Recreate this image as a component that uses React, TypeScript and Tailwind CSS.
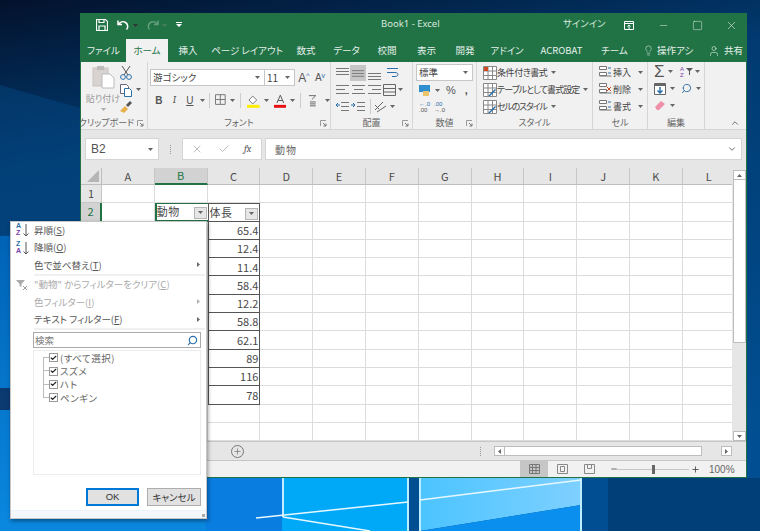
import React from 'react';
import { ChevronDown, ChevronUp, Lightbulb, Minus, Plus, Search, Square, User, X, Check } from 'lucide-react';

const jp = "font-['Noto_Sans_CJK_JP','Noto_Sans',sans-serif] [font-feature-settings:'palt']";

const tabs = [
  { name: 'ファイル', w: 'w-[45px]' },
  { name: 'ホーム', w: 'w-[42px]', active: true },
  { name: '挿入', w: 'w-[40px]' },
  { name: 'ページ レイアウト', w: 'w-[78px]' },
  { name: '数式', w: 'w-[40px]' },
  { name: 'データ', w: 'w-[41px]' },
  { name: '校閲', w: 'w-[40px]' },
  { name: '表示', w: 'w-[39px]' },
  { name: '開発', w: 'w-[38px]' },
  { name: 'アドイン', w: 'w-[46px]' },
  { name: 'ACROBAT', w: 'w-[63px]' },
  { name: 'チーム', w: 'w-[43px]' },
];

const columns = ['A', 'B', 'C', 'D', 'E', 'F', 'G', 'H', 'I', 'J', 'K', 'L'];
const lengths = ['65.4', '12.4', '11.4', '58.4', '12.2', '58.8', '62.1', '89', '116', '78'];

const Caret = ({ className = '' }: { className?: string }) => (
  <svg width="5" height="3" viewBox="0 0 5 3" className={`shrink-0 ${className}`}>
    <path d="M0 0h5L2.5 3z" fill="#666" />
  </svg>
);

const Launcher = () => (
  <svg width="7" height="7" viewBox="0 0 7 7" className="shrink-0">
    <path d="M.5 6V.5H6" fill="none" stroke="#999" />
    <path d="M3 3l3 3M6 3.5V6H3.5" fill="none" stroke="#777" />
  </svg>
);

const Lines = ({ kind }: { kind: 'top' | 'mid' | 'bot' | 'l' | 'c' | 'r' }) => {
  const y = kind === 'top' ? [2, 5, 8] : kind === 'mid' ? [4, 7, 10] : kind === 'bot' ? [7, 10, 13] : [2, 6, 10];
  const x = (i: number) => {
    const short = i === 1;
    if (kind === 'l') return short ? [2, 11] : [2, 15];
    if (kind === 'r') return short ? [6, 15] : [2, 15];
    if (kind === 'c') return short ? [4, 13] : [2, 15];
    return [2, 15];
  };
  return (
    <svg width="17" height="14" viewBox="0 0 17 14">
      {y.map((v, i) => (
        <path key={i} d={`M${x(i)[0]} ${v}.5H${x(i)[1]}`} stroke="#777" />
      ))}
    </svg>
  );
};

const Group = ({ label, w, launcher, children }: { label: string; w: string; launcher?: boolean; children: React.ReactNode }) => (
  <div className={`${w} h-full shrink-0 flex flex-col border-r border-[#d6d6d6]`}>
    <div className="flex-1 min-h-0">{children}</div>
    <div className="h-[13px] flex items-center relative justify-center text-[9px] leading-none text-[#666] whitespace-nowrap">
      <span className={launcher && label === 'クリップボード' ? 'mr-[15px]' : ''}>{label}</span>
      {launcher && (
        <span className="absolute right-[3px] top-[4px]">
          <Launcher />
        </span>
      )}
    </div>
  </div>
);

const Clipboard = () => (
  <Group label="クリップボード" w="w-[67px]" launcher>
    <div className="flex pl-[5px] pt-[3px]">
      <div className="w-[34px] flex flex-col items-center text-[9px] leading-none text-[#999]">
        <svg width="23" height="24" viewBox="0 0 23 24">
          <rect x="1" y="3" width="15" height="18" fill="#d8d2d0" stroke="#c8c2c0" />
          <rect x="5" y="1" width="7" height="4" fill="#bbb" />
          <path d="M10 9h8l4 4v10H10z" fill="#fff" stroke="#bbb" />
        </svg>
        <span className="mt-[5px] whitespace-nowrap">貼り付け</span>
        <Caret className="mt-[5px] opacity-50" />
      </div>
      <div className="-ml-px -mt-px flex flex-col">
        <div className="h-[17px] flex items-center">
          <svg width="14" height="16" viewBox="0 0 14 16">
            <path d="M3 1l6 9M11 1L5 10" stroke="#555" fill="none" />
            <circle cx="4" cy="12" r="2.4" fill="none" stroke="#2d6fa8" />
            <circle cx="10" cy="12" r="2.4" fill="none" stroke="#2d6fa8" />
          </svg>
        </div>
        <div className="h-[17px] flex items-center gap-[3px]">
          <svg width="14" height="16" viewBox="0 0 14 16">
            <path d="M1.500 2.500h6l2 2v7h-8z" fill="#fff" stroke="#667" />
            <path d="M5.500 6.500h5l2 2v6h-7z" fill="#fff" stroke="#2d6fa8" />
          </svg>
          <Caret />
        </div>
        <div className="h-[17px] flex items-center">
          <svg width="14" height="14" viewBox="0 0 14 14">
            <path d="M1 11l5-5 3 3-4 4z" fill="#e8b04a" />
            <path d="M7 5l4-4 2 2-4 4z" fill="#555" />
          </svg>
        </div>
      </div>
    </div>
  </Group>
);

const Font = () => (
  <Group label="フォント" w="w-[183px]" launcher>
    <div className="pl-[2px] pt-[7px] flex flex-col gap-[6px]">
      <div className="flex items-center h-[17px]">
        <div className="w-[115px] h-full bg-white border border-[#c6c6c6] flex items-center justify-between px-[2px] text-[9.5px] text-[#444]">
          <span>游ゴシック</span>
          <Caret className="mr-[2px]" />
        </div>
        <div className="w-[30px] h-full bg-white border border-l-0 border-[#c6c6c6] flex items-center justify-between px-[2px] text-[10px] text-[#444]">
          <span>11</span>
          <Caret className="mr-[2px]" />
        </div>
        <div className="w-[16px] ml-[1px] text-[12px] text-[#555] text-center font-['Liberation_Sans',sans-serif]">
          A<sup className="text-[#2d6fa8] text-[7px]">^</sup>
        </div>
        <div className="w-[16px] text-[10px] text-[#555] text-center font-['Liberation_Sans',sans-serif]">
          A<sup className="text-[#2d6fa8] text-[7px]">v</sup>
        </div>
      </div>
      <div className="flex items-center h-[16px] text-[#555] font-['Liberation_Sans',sans-serif] text-[10px]">
        <span className="w-[16px] ml-[1px] text-center font-bold">B</span>
        <span className="w-[16px] text-center italic font-serif">I</span>
        <span className="w-[16px] text-center underline">U</span>
        <Caret className="ml-[2px]" />
        <span className="w-px h-[15px] bg-[#ccc] ml-[4px] mr-[4px]" />
        <svg width="13" height="13" viewBox="0 0 13 13" className="ml-[1px]">
          <path d="M.5.500h10v10H.5zM5.500.5v10M.5 5.500h10" fill="none" stroke="#777" />
        </svg>
        <Caret className="ml-[3px]" />
        <span className="w-px h-[15px] bg-[#ccc] ml-[5px] mr-[5px]" />
        <svg width="15" height="15" viewBox="0 0 15 15">
          <path d="M3 7l4-4 4 4-4 4z" fill="#fff" stroke="#777" />
          <rect x="1" y="12" width="13" height="3" fill="#ffee00" />
        </svg>
        <Caret className="ml-[3px]" />
        <svg width="13" height="15" viewBox="0 0 13 15" className="ml-[5px]">
          <path d="M3 10l3.500-8L10 10M4.500 7.500h4" fill="none" stroke="#555" />
          <rect x="0" y="12" width="13" height="3" fill="#e81010" />
        </svg>
        <Caret className="ml-[4px]" />
        <span className="w-px h-[15px] bg-[#ccc] ml-[5px] mr-[5px]" />
        <svg width="12" height="15" viewBox="0 0 12 15" className="ml-[1px]">
          <path d="M2 2.500h7L5 6.500M3 9h6M3 11h6M3 13h6" fill="none" stroke="#666" />
        </svg>
        <Caret className="ml-[6px]" />
      </div>
    </div>
  </Group>
);

const Align = () => (
  <Group label="配置" w="w-[82px]" launcher>
    <div className="pl-[3px] grid grid-cols-[16px_16px_16px_22px] auto-rows-[17px] pt-[2px] items-center justify-items-center">
      <Lines kind="top" />
      <div className="bg-[#c6c6c6] w-[16px] h-[16px] flex items-center justify-center"><Lines kind="mid" /></div>
      <Lines kind="bot" />
      <svg width="15" height="12" viewBox="0 0 15 12"><path d="M1 1.500h11M1 5.500h8c4 0 4 4 0 4H6" fill="none" stroke="#2d6fa8" /></svg>
      <Lines kind="l" />
      <Lines kind="c" />
      <Lines kind="r" />
      <div className="flex items-center gap-[2px]">
        <svg width="13" height="12" viewBox="0 0 13 12"><path d="M.5.500h12v11H.5zM.5 4.500h12M.5 8h12" fill="none" stroke="#666" /></svg>
        <Caret />
      </div>
      <svg width="14" height="12" viewBox="0 0 14 12"><path d="M6 1.500h8M6 5.500h8M6 9.500h8" stroke="#777" /><path d="M5 4H1m2-2L1 4l2 2" fill="none" stroke="#2d6fa8" /></svg>
      <svg width="14" height="12" viewBox="0 0 14 12"><path d="M6 1.500h8M6 5.500h8M6 9.500h8" stroke="#777" /><path d="M0 4h4M2 2l2 2-2 2" fill="none" stroke="#2d6fa8" /></svg>
      <div className="col-span-2 justify-self-start flex items-center ml-[4px]">
        <span className="w-px h-[15px] bg-[#ccc] mr-[3px]" />
        <svg width="13" height="13" viewBox="0 0 13 13"><path d="M1 10l8-8M3 12l9-6M1 5l4 4" fill="none" stroke="#666" /></svg>
        <Caret className="ml-[3px]" />
      </div>
    </div>
  </Group>
);

const NumberGroup = () => (
  <Group label="数値" w="w-[64px]" launcher>
    <div className="pl-[3px] pt-[2px]">
      <div className="w-[57px] h-[17px] bg-white border border-[#c6c6c6] flex items-center justify-between px-[2px] text-[9.5px] text-[#444]">
        <span>標準</span>
        <Caret className="mr-[2px]" />
      </div>
      <div className="h-[17px] mt-[1px] flex items-center text-[#555] font-['Liberation_Sans',sans-serif]">
        <svg width="13" height="13" viewBox="0 0 13 13" className="ml-[2px]">
          <rect x="1" y="1" width="11" height="7" fill="#2d8fcf" />
          <rect x="5" y="7" width="6" height="5" fill="#e8c46a" />
        </svg>
        <Caret className="ml-[4px]" />
        <span className="ml-[6px] text-[11px]">%</span>
        <span className="ml-[9px] text-[11px] font-bold leading-none">,</span>
      </div>
      <div className="h-[16px] flex items-center gap-[4px] pl-[3px] text-[6px] leading-[6px] text-[#555] font-['Liberation_Sans',sans-serif]">
        <span className="text-[#2d6fa8]">←.0<br /><span className="text-[#555]">.00</span></span>
        <span className="text-[#2d6fa8]">.00<br /><span className="text-[#555]">→.0</span></span>
      </div>
    </div>
  </Group>
);

const StyleIcon = ({ red }: { red?: boolean }) => (
  <svg width="14" height="14" viewBox="0 0 14 14" className="shrink-0">
    <path d="M.5.500h13v13H.5zM.5 5h13M.5 9.500h13M5 .5v13M9.500.5v13" fill="#fff" stroke="#888" />
    {red ? <rect x="1" y="1" width="4" height="4" fill="#d04a20" /> : <path d="M5 13l7-7 1 1-6 6z" fill="#2d6fa8" />}
  </svg>
);

const styleRows = [
  { name: '条件付き書式', track: 'tracking-[-0.4px]' },
  { name: 'テーブルとして書式設定', track: 'tracking-[-0.9px]' },
  { name: 'セルのスタイル', track: 'tracking-[-1.2px]' },
];

const Styles = () => (
  <Group label="スタイル" w="w-[116px]">
    <div className="pl-[6px] pt-[2px] flex flex-col text-[9px] leading-[17px] text-[#444]">
      {styleRows.map((s, i) => (
        <div key={s.name} className="h-[17px] flex items-center whitespace-nowrap">
          <StyleIcon red={i === 0} />
          <span className={s.track}>{s.name}</span>
          <Caret className="ml-[4px]" />
        </div>
      ))}
    </div>
  </Group>
);

const Cells = () => (
  <Group label="セル" w="w-[55px]">
    <div className="pl-[6px] pt-[2px] flex flex-col text-[9px] text-[#444]">
      {['挿入', '削除', '書式'].map((s, i) => (
        <div key={s} className="h-[17px] flex items-center">
          <svg width="13" height="13" viewBox="0 0 13 13" className="shrink-0">
            <path d="M.5.500h7v3h-7zM.5 6.500h7v3h-7zM.5 10h12" fill="#fff" stroke="#777" />
            {i === 1 ? <path d="M8 4l4 4M12 4l-4 4" stroke="#d04a20" /> : <path d="M9 2h3M9 7h3" stroke="#2d6fa8" />}
          </svg>
          <span className="ml-[1px] w-[25px]">{s}</span>
          <Caret />
        </div>
      ))}
    </div>
  </Group>
);

const Editing = () => (
  <Group label="編集" w="w-[57px]">
    <div className="pl-[6px] pt-[1px] grid grid-cols-[26px_24px] auto-rows-[17px] items-center">
      <div className="flex items-center">
        <span className="text-[17px] leading-none text-[#555] font-['Liberation_Sans',sans-serif]">Σ</span>
        <Caret className="ml-[3px]" />
      </div>
      <div className="flex items-center gap-[2px]">
        <span className="text-[6px] leading-[6px] text-[#7a3fa8] font-['Liberation_Sans',sans-serif]">A<br />Z</span>
        <svg width="7" height="7" viewBox="0 0 7 7"><path d="M0 0h7L4 3v4H3V3z" fill="#555" /></svg>
        <Caret />
      </div>
      <div className="flex items-center gap-[3px]">
        <svg width="12" height="12" viewBox="0 0 12 12"><path d="M.5.500h11v11H.5z" fill="#fff" stroke="#666" /><path d="M1 1h10v2H1z" fill="#666" /><path d="M6 4v6M3.500 7.500L6 10l2.500-2.500" fill="none" stroke="#2d6fa8" strokeWidth="1.500" /></svg>
        <Caret className="ml-[1px]" />
      </div>
      <div className="flex items-center gap-[3px] pl-[1px]">
        <Search size={11} strokeWidth={2} className="text-[#2d6fa8] -scale-x-100" />
        <Caret className="ml-[1px]" />
      </div>
      <div className="flex items-center gap-[3px]">
        <svg width="12" height="11" viewBox="0 0 12 11"><path d="M1 7l6-6 4 3-6 6H3z" fill="#ef8fa8" /></svg>
        <Caret className="ml-[1px]" />
      </div>
    </div>
  </Group>
);

const Ribbon = () => (
  <div className={`h-[67px] shrink-0 bg-[#f1f1f1] flex relative ${jp}`}>
    <Clipboard />
    <Font />
    <Align />
    <NumberGroup />
    <Styles />
    <Cells />
    <Editing />
    <ChevronUp size={10} strokeWidth={2} className="absolute right-[6px] bottom-[1px] text-[#555]" />
  </div>
);

const FormulaBar = () => (
  <div className={`h-[39px] shrink-0 bg-[#e6e6e6] border-t border-[#d4d4d4] flex items-start pl-[4px] pr-[4px] pt-[8px] ${jp}`}>
    <div className="w-[74px] h-[22px] bg-white border border-[#d4d4d4] flex items-center justify-between pl-[5px] pr-[5px] text-[12px] text-[#555]">
      <span className="font-['Liberation_Sans',sans-serif]">B2</span>
      <Caret />
    </div>
    <div className="w-[23px] h-[22px] flex items-center justify-center text-[#aaa]">
      <span className="w-[3px] h-[9px] border-l border-dotted border-[#999] ml-[2px]" />
    </div>
    <div className="w-[80px] h-[22px] bg-white border border-[#d4d4d4] flex items-center pl-[8px] text-[#aaa]">
      <X size={12} strokeWidth={1.5} />
      <Check size={12} strokeWidth={1.5} className="ml-[15px]" />
      <span className="ml-[14px] text-[10px] italic text-[#555] font-serif">fx</span>
    </div>
    <div className="ml-[3px] flex-1 h-[22px] bg-white border border-[#d4d4d4] flex items-center justify-between pl-[9px] pr-[4px] text-[10px] text-[#666]">
      <span className="tracking-[1px]">動物</span>
      <ChevronDown size={10} strokeWidth={2} className="text-[#555]" />
    </div>
  </div>
);

const FilterButton = () => (
  <span className="absolute right-[1px] bottom-[1px] w-[13px] h-[12px] bg-[#e6e6e6] border border-[#b5b5b5] flex items-center justify-center">
    <Caret />
  </span>
);

const Sheet = () => {
  const rows = Array.from({ length: 14 }, (_, i) => i + 1);
  return (
    <div className={`flex-1 min-h-0 flex bg-[#e6e6e6] ${jp}`}>
      <div className="w-[652px] overflow-hidden bg-white">
        <div className="grid grid-cols-[21px_repeat(12,52.8px)] grid-rows-[17px_repeat(14,18.3px)] text-[11px] text-[#4a4a4a]">
          <div className="bg-[#e6e6e6] border-r border-b border-[#bdbdbd] relative overflow-hidden">
            <span className="absolute right-[2px] bottom-[2px] w-0 h-0 border-l-[12px] border-l-transparent border-b-[12px] border-b-[#b5b5b5]" />
          </div>
          {columns.map((c) => (
            <div
              key={c}
              className={`flex items-center justify-center border-r leading-none border-[#c6c6c6] ${c === 'B' ? 'bg-[#d2d2d2] border-b-2 border-b-[#217346] text-[#217346]' : 'bg-[#e6e6e6] border-b border-b-[#bdbdbd]'}`}
            >
              {c}
            </div>
          ))}
          {rows.map((r) => (
            <React.Fragment key={r}>
              {/* row numbers from 3 down sit under the open filter menu */}
              <div className={`flex items-center justify-center border-r border-b border-[#c6c6c6] leading-none ${r === 2 ? 'bg-[#d2d2d2] text-[#217346] border-r-2 border-r-[#217346]' : 'bg-[#e6e6e6]'}`}>
                {r <= 2 ? r : null}
              </div>
              {columns.map((c) => {
                const inTable = r >= 2 && r <= 12;
                if (c === 'B' && r === 2)
                  return (
                    <div key={c} className="relative border-2 border-r-0 border-t border-[#217346] flex items-center leading-none whitespace-nowrap tracking-[0.5px]">
                      動物
                      <FilterButton />
                    </div>
                  );
                if (c === 'C' && inTable)
                  return (
                    <div
                      key={c}
                      className={`relative border-x border-b border-[#555] flex items-center ${r === 2 ? 'border-t pl-[1px] tracking-[0.5px]' : 'justify-end pr-[1px]'}`}
                    >
                      {r === 2 ? '体長' : lengths[r - 3]}
                      {r === 2 && <FilterButton />}
                    </div>
                  );
                return <div key={c} className="border-r border-b border-[#dcdcdc]" />;
              })}
            </React.Fragment>
          ))}
        </div>
      </div>
      <div className="w-[13px] ml-px flex flex-col pt-[2px]">
        <div className="h-[10px] bg-white border border-[#bdbdbd] flex items-center justify-center">
          <Caret className="rotate-180" />
        </div>
        <div className="h-[163px] bg-white border border-[#bdbdbd] border-t-0" />
        <div className="flex-1" />
        <div className="h-[10px] bg-white border border-[#bdbdbd] flex items-center justify-center">
          <Caret />
        </div>
      </div>
    </div>
  );
};

const SheetBar = () => (
  <div className="h-[20px] shrink-0 bg-[#e6e6e6] border-y border-[#c6c6c6] flex items-center">
    <div className="ml-[150px] w-[13px] h-[13px] rounded-full border border-[#777] flex items-center justify-center text-[#777]">
      <Plus size={9} strokeWidth={2} />
    </div>
    <span className="ml-[236px] w-[3px] h-[9px] border-l border-dotted border-[#999]" />
    <div className="ml-[11px] w-[238px] h-[10px] flex">
      <div className="w-[11px] h-[10px] bg-white border border-[#bdbdbd] flex items-center justify-center">
        <Caret className="rotate-90" />
      </div>
      <div className="w-[197px] h-[10px] bg-white border border-[#bdbdbd] border-l-0" />
      <div className="flex-1" />
      <div className="w-[11px] h-[10px] bg-white border border-[#bdbdbd] flex items-center justify-center">
        <Caret className="-rotate-90" />
      </div>
    </div>
  </div>
);

const StatusBar = () => (
  <div className="h-[16px] shrink-0 bg-[#f1f1f1] flex items-center text-[10px] text-[#666] font-['Liberation_Sans',sans-serif]">
    <div className="ml-[439px] w-[28px] h-full bg-[#c6c6c6] flex items-center justify-center">
      <svg width="11" height="10" viewBox="0 0 11 10"><path d="M.5.500h10v9H.5zM.5 3.500h10M.5 6.500h10M3.500.5v9M7 .5v9" fill="none" stroke="#777" /></svg>
    </div>
    <svg width="11" height="10" viewBox="0 0 11 10" className="ml-[9px]"><path d="M.5.500h10v9H.5zM3.500 2.500h4v5h-4z" fill="none" stroke="#888" /></svg>
    <svg width="11" height="10" viewBox="0 0 11 10" className="ml-[16px]"><path d="M.5.500h10v9H.5zM3.500.5v4h4v-4" fill="none" stroke="#888" /></svg>
    <Minus size={8} strokeWidth={2.5} className="ml-[15px] text-[#555]" />
    <div className="-ml-[1px] w-[72px] h-px bg-[#c6c6c6] relative">
      <span className="absolute left-[35px] -top-[4px] w-[3px] h-[9px] bg-[#666]" />
    </div>
    <Plus size={9} strokeWidth={2.5} className="ml-[2px] text-[#555]" />
    <span className="ml-[9px] text-[10px]">100%</span>
  </div>
);

const SortIcon = ({ top, bottom }: { top: string; bottom: string }) => (
  <>
    <span className="absolute left-[5px] top-[1px] text-[7px] leading-[7px] text-[#7a3fa8] font-['Liberation_Sans',sans-serif] font-bold">
      <span className="text-[#2d6fa8]">{top}</span>
      <br />
      {bottom}
    </span>
    <svg width="6" height="13" viewBox="0 0 6 13" className="absolute left-[12px] top-[3px]">
      <path d="M3 0v12M.5 9.500L3 12l2.500-2.500" fill="none" stroke="#555" />
    </svg>
  </>
);

const FilterMenu = () => {
  const rowCls = 'h-[17.5px] shrink-0 flex items-center justify-between pl-[23px] pr-[5px] whitespace-nowrap';
  return (
    <div className={`absolute left-[10px] top-[221px] w-[197px] h-[298px] bg-white border border-[#c6c6c6] shadow-[1px_2px_4px_rgba(0,0,0,0.4)] flex flex-col text-[9.5px] text-[#555] ${jp}`}>
      <div className={`${rowCls} relative -mt-px`}>
        <span>昇順(<u>S</u>)</span>
        <SortIcon top="A" bottom="Z" />
      </div>
      <div className={`${rowCls} relative`}>
        <span>降順(<u>O</u>)</span>
        <SortIcon top="Z" bottom="A" />
      </div>
      <div className={rowCls}>
        <span>色で並べ替え(<u>T</u>)</span>
        <Caret className="-rotate-90" />
      </div>
      <div className="ml-[23px] mr-[1px] h-[2px] shrink-0 bg-[#f0f0f0]" />
      <div className={`${rowCls} relative text-[#aaa]`}>
        <span>"動物" からフィルターをクリア(<u>C</u>)</span>
        <svg width="12" height="12" viewBox="0 0 12 12" className="absolute left-[5px] top-[3px]">
          <path d="M0 1h9L5.500 5v3L3.500 7V5z" fill="#aaa" />
          <path d="M7 7l4 4M11 7l-4 4" stroke="#999" />
        </svg>
      </div>
      <div className={`${rowCls} text-[#aaa]`}>
        <span>色フィルター(<u>I</u>)</span>
        <Caret className="-rotate-90 opacity-50" />
      </div>
      <div className={rowCls}>
        <span>テキスト フィルター(<u>F</u>)</span>
        <Caret className="-rotate-90" />
      </div>
      <div className="ml-[23px] mr-[1px] h-[2px] shrink-0 bg-[#f0f0f0]" />
      <div className="mt-[2px] ml-[22px] mr-[5px] h-[16px] shrink-0 border border-[#aaa] flex items-center justify-between pl-[1px] pr-[2px] text-[#777]">
        <span>検索</span>
        <Search size={11} strokeWidth={2.5} className="text-[#2d6fa8] -scale-x-100" />
      </div>
      <div className="mt-[2px] ml-[22px] mr-[5px] h-[125px] shrink-0 border border-[#ececec]">
        {['(すべて選択)', 'スズメ', 'ハト', 'ペンギン'].map((t, i) => (
          <div key={t} className="h-[13.4px] flex items-center relative pl-[15px] tracking-[0.5px] text-[#666]">
            <span className="absolute left-[9px] top-[6px] w-[6px] h-px bg-[#bbb]" />
            <span className={`absolute left-[9px] w-px bg-[#bbb] ${i === 0 ? 'top-[6px] h-[8px]' : i === 3 ? 'top-0 h-[7px]' : 'top-0 h-full'}`} />
            <span className="w-[9px] h-[9px] border border-[#999] bg-white flex items-center justify-center mr-[2px]">
              <Check size={8} strokeWidth={4} className="text-[#222]" />
            </span>
            {t}
          </div>
        ))}
      </div>
      <div className="mt-[13px] mr-[5px] flex justify-end gap-[8px]">
        <div className="w-[53px] h-[18px] bg-[#e1e1e1] border-2 border-[#0078d7] flex items-center justify-center text-[#333] font-['Liberation_Sans',sans-serif]">OK</div>
        <div className="w-[54px] h-[18px] bg-[#e1e1e1] border border-[#adadad] flex items-center justify-center text-[#333]">キャンセル</div>
      </div>
      <div className="mt-auto h-[8px] bg-[#f4f8fc] border-t border-[#eef3f8] relative">
        <span className="absolute right-[1px] bottom-[1px] w-[3px] h-[3px] bg-[#aaa]" />
      </div>
    </div>
  );
};

const Wallpaper = () => (
  <svg className="absolute inset-0" width="760" height="531" viewBox="0 0 760 531">
    <defs>
      <linearGradient id="bg" x1="0" y1="0" x2="0.25" y2="1">
        <stop offset="0" stopColor="#03122c" />
        <stop offset="0.3" stopColor="#013a70" />
        <stop offset="1" stopColor="#014f92" />
      </linearGradient>
      <linearGradient id="left" x1="0" y1="0" x2="0" y2="1">
        <stop offset="0" stopColor="#0062b4" />
        <stop offset="1" stopColor="#0a88e0" />
      </linearGradient>
      <linearGradient id="pane" x1="0" y1="0" x2="1" y2="0">
        <stop offset="0" stopColor="#4cc4ff" />
        <stop offset="1" stopColor="#7ed0ff" />
      </linearGradient>
    </defs>
    <rect width="760" height="531" fill="url(#bg)" />
    <path d="M0 85L80 108V236H0z" fill="#03467f" opacity="0.5" />
    <path d="M760 478V531H608V478z" fill="#013f78" />
    <path d="M0 236L206 230V531H0z" fill="url(#left)" />
    <path d="M0 388H10V410H0z" fill="#0a3a70" />
    <path d="M206 478H408V531H206z" fill="#0a7de0" />
    <path d="M282 478H408V531H282z" fill="#00a8f8" />
    <path d="M420 478H581V505L420 531z" fill="url(#pane)" />
    <path d="M420 531L581 505V531z" fill="#0a8fee" />
    <path d="M408 478V531M420 478V531M283 478V517M581 478V531" stroke="#bdeeff" strokeWidth="2" />
    <path d="M256 518L408 502M420 500L581 480M283 517L370 531" stroke="#e6f8ff" strokeWidth="1.500" />
  </svg>
);

export default function App() {
  return (
    <div className="relative w-[760px] h-[531px] overflow-hidden bg-[#013a70]">
      <Wallpaper />
      <div className="absolute left-[80px] top-[13px] w-[667px] h-[465px] bg-[#e6e6e6] border border-[#217346] flex flex-col">
        <div className={`h-[25px] shrink-0 bg-[#217346] flex items-center pb-[3px] text-[9.5px] text-[#d8e8de] relative ${jp}`}>
          <div className="flex items-center pl-[15px] text-white">
            <svg width="12" height="12" viewBox="0 0 12 12"><path d="M.5.500h9l2 2v9H.5zM3 .5v3h5v-3M3 11.500V7h6v4.500" fill="none" stroke="#fff" strokeWidth="1.200" /></svg>
            <svg width="13" height="12" viewBox="0 0 13 12" className="ml-[9px]"><path d="M1 1.500v4h4M1.500 5.500C3 3 6 2 8.500 3.500s3 5 1 7" fill="none" stroke="#fff" strokeWidth="1.500" /></svg>
            <Caret className="ml-[3px] invert brightness-200" />
            <svg width="13" height="12" viewBox="0 0 13 12" className="ml-[8px] opacity-30"><path d="M12 1.500v4H8M11.500 5.500C10 3 7 2 4.500 3.500s-3 5-1 7" fill="none" stroke="#fff" strokeWidth="1.500" /></svg>
            <Caret className="ml-[3px] invert opacity-30" />
            <svg width="6" height="6" viewBox="0 0 6 6" className="ml-[9px]"><path d="M0 .5h6M0 2h6l-3 3z" fill="#fff" stroke="none" /><path d="M0 .5h6" stroke="#fff" /></svg>
          </div>
          <span className="absolute left-[300px] top-[5px] leading-none whitespace-nowrap font-['Noto_Sans',sans-serif]">Book1 - Excel</span>
          <span className="absolute left-[482px] top-[5px] leading-none">サインイン</span>
          <svg width="10" height="9" viewBox="0 0 10 9" className="absolute left-[543px] top-[7px]"><path d="M.5.500h9v8h-9zM.5 2.500h9M5 8V4M3.500 5.500L5 4l1.500 1.500" fill="none" stroke="#fff" /></svg>
          <Minus size={11} className="absolute left-[577px] top-[6px] text-white" strokeWidth={1} />
          <Square size={11} className="absolute left-[611px] top-[6px] text-white" strokeWidth={1} />
          <X size={13} className="absolute left-[644px] top-[5px] text-white" strokeWidth={1} />
        </div>
        <div className={`h-[23px] shrink-0 bg-[#217346] flex items-stretch text-[9.5px] text-[#e6f0ea] whitespace-nowrap relative ${jp}`}>
          {tabs.map((t) => (
            <div key={t.name} className={`${t.w} flex items-center justify-center ${t.active ? 'bg-[#f1f1f1] text-[#217346]' : ''}`}>
              {t.name}
            </div>
          ))}
          <div className="flex items-center">
            <Lightbulb size={11} strokeWidth={1.2} className="ml-[7px]" />
            <span className="ml-[3px] w-[39px] overflow-hidden">操作アシ</span>
            <User size={12} strokeWidth={1.2} className="ml-[12px]" />
            <span className="ml-[4px]">共有</span>
          </div>
        </div>
        <Ribbon />
        <FormulaBar />
        <Sheet />
        <SheetBar />
        <StatusBar />
      </div>
      <FilterMenu />
    </div>
  );
}
